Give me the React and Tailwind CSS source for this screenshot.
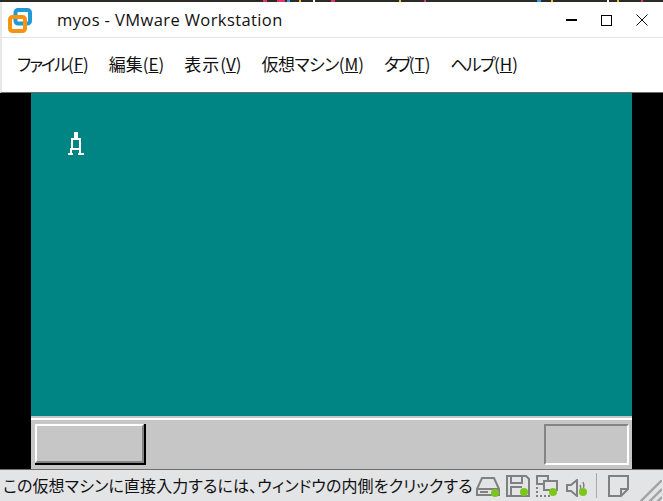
const specks = [
  { gap: 263, w: 4, c: '#e8326e' },
  { gap: 10, w: 8, c: '#e8326e' },
  { gap: 2, w: 3, c: '#2f9be8' },
  { gap: 9, w: 2, c: '#f0c020' },
  { gap: 12, w: 2, c: '#ffffff' },
  { gap: 16, w: 4, c: '#e8326e' },
  { gap: 64, w: 2, c: '#f0c020' },
  { gap: 23, w: 2, c: '#e8326e' },
  { gap: 111, w: 4, c: '#2f9be8' },
  { gap: 10, w: 2, c: '#f0c020' },
  { gap: 54, w: 2, c: '#ffffff' },
  { gap: 8, w: 2, c: '#f0c020' },
  { gap: 22, w: 2, c: '#e8326e' },
];

const menus = [
  ['ファイル', 'F', 'tracking-[-2px]'],
  ['編集', 'E', ''],
  ['表示', 'V', 'tracking-[1px]'],
  ['仮想マシン', 'M', 'tracking-[-0.6px]'],
  ['タブ', 'T', 'tracking-[-2.5px]'],
  ['ヘルプ', 'H', 'tracking-[-1.7px]'],
];

function Logo() {
  return (
    <svg width="25" height="26" viewBox="0 0 25 26" fill="none">
      <rect x="7.5" y="2" width="14.5" height="13.5" rx="2.5" stroke="#1f9ad6" strokeWidth="4" />
      <rect x="2" y="9" width="15" height="14" rx="2.5" stroke="#f7930e" strokeWidth="4" />
    </svg>
  );
}

// 화면 안의 작은 글자 (도트)
function Sprite() {
  return (
    <svg width="16" height="24" viewBox="0 0 16 24" fill="#fff" shapeRendering="crispEdges">
      <rect x="6" y="0" width="4" height="8" />
      <rect x="3" y="8" width="2" height="8" />
      <rect x="11" y="8" width="2" height="8" />
      <rect x="3" y="6" width="10" height="2" />
      <rect x="2" y="16" width="11" height="2" />
      <rect x="2" y="18" width="2" height="3" />
      <rect x="11" y="18" width="2" height="3" />
      <rect x="0" y="21" width="5" height="2" />
      <rect x="10" y="21" width="6" height="2" />
    </svg>
  );
}

function Dot({ cx, cy }) {
  return <circle cx={cx} cy={cy} r="4" fill="#7cc51e" stroke="none" />;
}

function HddIcon() {
  return (
    <svg width="25" height="23" viewBox="0 0 25 23" fill="none" stroke="#808080" strokeWidth="2">
      <path d="M6 3h12l5 11v6H1v-6z" />
      <path d="M1 14h22" />
      <path d="M4 17h8" />
      <Dot cx="19" cy="18" />
    </svg>
  );
}

function FloppyIcon() {
  return (
    <svg width="26" height="24" viewBox="0 0 26 24" fill="none" stroke="#808080" strokeWidth="2">
      <path d="M2 2h19l3 3v17H2z" />
      <path d="M6 2v7h11V2" />
      <path d="M6 22v-9h11" />
      <Dot cx="19" cy="18" />
    </svg>
  );
}

function NetIcon() {
  return (
    <svg width="24" height="23" viewBox="0 0 24 23" fill="none" stroke="#808080" strokeWidth="2">
      <rect x="2" y="2" width="11" height="8" />
      <rect x="9" y="7" width="13" height="9" fill="#e3e4e6" />
      <path d="M2 13v9h14" strokeDasharray="2 2" />
      <Dot cx="18" cy="18" />
    </svg>
  );
}

function SoundIcon() {
  return (
    <svg width="21" height="18" viewBox="0 0 21 18" fill="none" stroke="#808080" strokeWidth="2">
      <path d="M1 6h4l6-5v16l-6-5H1z" />
      <path d="M14 6q1.5 2.5 0 5" strokeWidth="1.5" />
      <path d="M17 3q1.5 3 .5 6" strokeWidth="1.5" />
      <Dot cx="17" cy="13" />
    </svg>
  );
}

function NoteIcon() {
  return (
    <svg width="22" height="23" viewBox="0 0 22 23" fill="none" stroke="#808080" strokeWidth="2">
      <path d="M2 2h19v13l-7 7H2z" />
      <path d="M21 15h-7v7" />
    </svg>
  );
}

function Grip() {
  return (
    <svg width="22" height="21" viewBox="0 0 22 21" fill="none" stroke="#a4a4a4" strokeWidth="2.4">
      <path d="M0 22L22 0" />
      <path d="M9 22L22 9" />
      <path d="M17 22l5-5" />
    </svg>
  );
}

export default function App() {
  return (
    <div
      className="flex h-[501px] w-[663px] flex-col overflow-hidden bg-white text-[#111]"
      style={{ fontFamily: '"Noto Sans CJK JP", "Noto Sans", sans-serif' }}
    >
      <div className="flex h-[2px] shrink-0 bg-[#2a2b26]">
        {specks.map((s, i) => (
          <div key={i} className="h-[2px]" style={{ marginLeft: s.gap, width: s.w, backgroundColor: s.c }} />
        ))}
      </div>

      <div className="flex h-[35px] shrink-0 items-center border-l-2 border-[#e8e8e8] bg-white">
        <div className="ml-[6px] mt-[3px] flex w-[49px] shrink-0">
          <Logo />
        </div>
        <div className="pt-[2px] text-[16.5px] leading-none tracking-[0.4px]" style={{ fontFamily: '"Open Sans", sans-serif' }}>
          myos - VMware Workstation
        </div>
        <div className="ml-auto mt-[1px] flex items-center">
          <div className="h-[1.5px] w-[11px] bg-black" />
          <div className="ml-[24px] h-[11px] w-[11px] border-[1.5px] border-black" />
          <svg className="ml-[24px] mr-[15px]" width="12" height="12" viewBox="0 0 12 12" stroke="#111" strokeWidth="1">
            <path d="M0.5 0.5L11.5 11.5M11.5 0.5L0.5 11.5" />
          </svg>
        </div>
      </div>

      <div className="flex h-[56px] shrink-0 items-center gap-[20px] border-y border-t-[#e5e5e5] border-b-[#6e6e6e] border-l-2 border-l-[#e8e8e8] pb-[4px] pl-[15px] text-[17px] leading-none [font-feature-settings:'palt']">
        {menus.map(([label, key, spacing]) => (
          <div key={key} className="whitespace-nowrap">
            <span className={spacing}>{label}</span>(<span className="underline">{key}</span>)
          </div>
        ))}
      </div>

      <div className="flex h-[377px] shrink-0 border-b border-[#6e6e6e] bg-black pl-[2px]">
        <div className="ml-[29px] flex w-[601px] flex-col">
          <div className="h-[323px] bg-[#008484] pl-[37px] pt-[39px]">
            <Sprite />
          </div>
          <div className="h-[2px] bg-[#c6c6c6]" />
          <div className="h-[2px] bg-white" />
          <div className="flex flex-1 items-start justify-between bg-[#c6c6c6] pl-[4px] pr-[3px] pt-[4px]">
            <div className="h-[41px] w-[111px] border-r-2 border-b-2 border-black">
              <div className="h-full border-t-2 border-l-2 border-r-2 border-b-2 border-t-white border-l-white border-r-[#848484] border-b-[#848484] bg-[#c6c6c6]" />
            </div>
            <div className="h-[41px] w-[85px] border-2 border-t-[#848484] border-l-[#848484] border-r-white border-b-white bg-[#c6c6c6]" />
          </div>
        </div>
      </div>

      <div className="flex min-h-0 flex-1 items-start bg-[#e3e4e6] pl-[3px]">
        <div className="mt-[7px] w-[472px] shrink-0 whitespace-nowrap text-[16px] leading-none tracking-[0.12px] [font-feature-settings:'palt']">
          この仮想マシンに直接入力するには、ウィンドウの内側をクリックする
        </div>
        <div className="ml-[1px] flex h-full items-start">
          <div className="mt-[5px] flex w-[29px]"><HddIcon /></div>
          <div className="mt-[4px] flex w-[30px]"><FloppyIcon /></div>
          <div className="mt-[4px] flex w-[31px]"><NetIcon /></div>
          <div className="mt-[9px] flex w-[30px]"><SoundIcon /></div>
          <div className="mt-[3px] h-[25px] w-[1px] bg-[#a8a8a8]" />
          <div className="ml-[10px] mt-[4px] flex w-[33px]"><NoteIcon /></div>
          <div className="mt-auto flex"><Grip /></div>
        </div>
      </div>
    </div>
  );
}
